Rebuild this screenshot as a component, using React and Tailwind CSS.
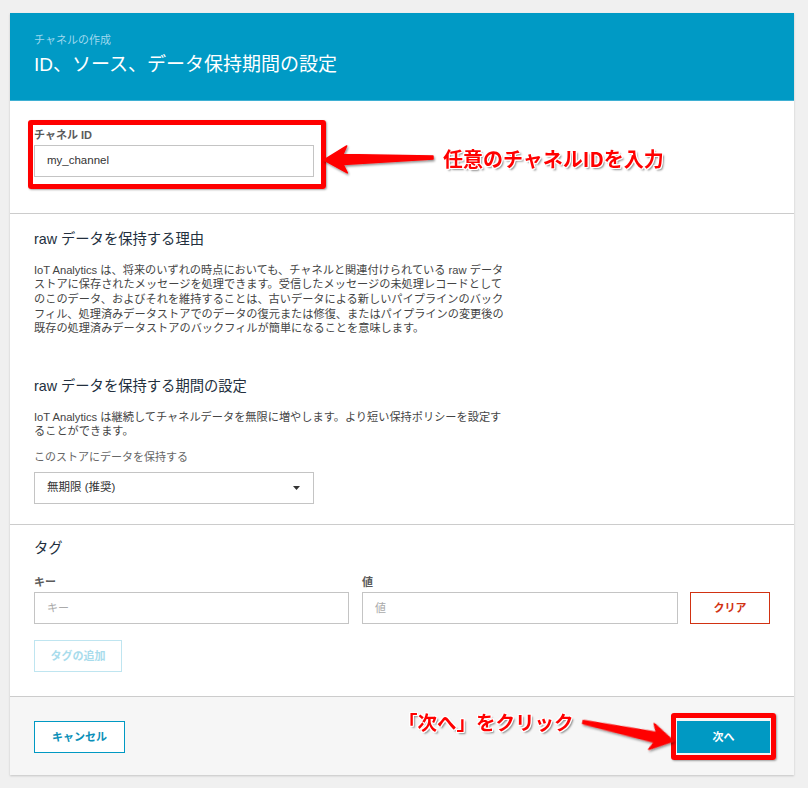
import React from "react";

const para1 = [
  "IoT Analytics は、将来のいずれの時点においても、チャネルと関連付けられている raw データ",
  "ストアに保存されたメッセージを処理できます。受信したメッセージの未処理レコードとして",
  "のこのデータ、およびそれを維持することは、古いデータによる新しいパイプラインのバック",
  "フィル、処理済みデータストアでのデータの復元または修復、またはパイプラインの変更後の",
  "既存の処理済みデータストアのバックフィルが簡単になることを意味します。",
];
const para2 = [
  "IoT Analytics は継続してチャネルデータを無限に増やします。より短い保持ポリシーを設定す",
  "ることができます。",
];

export default function App() {
  return (
    <div className="relative w-[808px] h-[788px] overflow-hidden bg-[#f0f0f0] pt-[13px] pl-[10px] font-['Liberation_Sans','Noto_Sans_CJK_JP',sans-serif]">
      <div className="w-[784px] bg-white shadow-[0_1px_2px_rgba(0,0,0,0.18)]">
        {/* Header */}
        <div className="h-[88px] bg-[#009ac5] pl-6 pt-5 border-b border-[#3fb0d3]">
          <div className="text-[11px] leading-[14px] text-[#9fd8ee]">チャネルの作成</div>
          <div className="mt-[6px] text-[19px] leading-6 text-white">ID、ソース、データ保持期間の設定</div>
        </div>

        {/* Channel ID */}
        <div className="px-6 pt-[28px] pb-[36px]">
          <div className="text-[11px] leading-[12px] font-bold text-[#5a5a5a]">チャネル ID</div>
          <div className="mt-1 w-[280px] h-8 border border-[#c4c4c4] pl-3 flex items-center text-[11.5px] text-[#333]">
            my_channel
          </div>
        </div>

        {/* Raw data */}
        <div className="border-t border-[#cccccc] px-6 pt-[15px] pb-5">
          <div className="text-[14.3px] leading-5 text-[#232f3e]">raw データを保持する理由</div>
          <div className="mt-[13.5px] text-[11.2px] leading-[14.7px] text-[#444]">
            {para1.map((l, i) => (
              <div key={i} className="whitespace-nowrap">{l}</div>
            ))}
          </div>
          <div className="mt-10 text-[14.3px] leading-5 text-[#232f3e]">raw データを保持する期間の設定</div>
          <div className="mt-[13.5px] text-[11.2px] leading-[14.7px] text-[#444]">
            {para2.map((l, i) => (
              <div key={i} className="whitespace-nowrap">{l}</div>
            ))}
          </div>
          <div className="mt-[11px] text-[11px] leading-[14px] text-[#666]">このストアにデータを保持する</div>
          <div className="mt-2 w-[280px] h-8 border border-[#c4c4c4] pl-3 pr-[13px] flex items-center justify-between text-[11.5px] text-[#333]">
            <span>無期限 (推奨)</span>
            <svg width="7" height="4" viewBox="0 0 7 4">
              <polygon points="0,0 7,0 3.5,4" fill="#333" />
            </svg>
          </div>
        </div>

        {/* Tags */}
        <div className="border-t border-[#cccccc] px-6 pt-[13px] pb-6">
          <div className="text-[14.3px] leading-5 text-[#232f3e]">タグ</div>
          <div className="mt-[17px] flex items-end">
            <div className="w-[315px]">
              <div className="text-[11px] leading-[14px] font-bold text-[#5a5a5a]">キー</div>
              <div className="mt-[3px] h-8 border border-[#c4c4c4] pl-3 flex items-center text-[11px] text-[#aaa]">キー</div>
            </div>
            <div className="w-[316px] ml-[13px]">
              <div className="text-[11px] leading-[14px] font-bold text-[#5a5a5a]">値</div>
              <div className="mt-[3px] h-8 border border-[#c4c4c4] pl-3 flex items-center text-[11px] text-[#aaa]">値</div>
            </div>
            <div className="ml-3 w-[80px] h-8 border border-[#d13212] flex items-center justify-center text-[11px] font-bold text-[#d13212]">
              クリア
            </div>
          </div>
          <div className="mt-4 w-[88px] h-8 border border-[#bfe5f0] flex items-center justify-center text-[11px] font-bold text-[#a8dcec]">
            タグの追加
          </div>
        </div>

        {/* Footer */}
        <div className="border-t border-[#cccccc] bg-[#f6f6f6] px-6 pt-6 pb-[22px] flex justify-between">
          <div className="w-[91px] h-8 border border-[#0099c3] bg-white flex items-center justify-center text-[11px] font-bold text-[#0a8fb8]">
            キャンセル
          </div>
          <div className="w-[93px] h-8 bg-[#0099c3] flex items-center justify-center text-[11px] font-bold text-white">
            次へ
          </div>
        </div>
      </div>

      {/* Annotation overlays */}
      <div className="absolute left-[28px] top-[120px] w-[298px] h-[69px] border-[5px] border-[#ff0000] rounded-[3px] shadow-[1px_1px_2px_rgba(0,0,0,0.35)] pointer-events-none" />
      <div className="absolute left-[671px] top-[713px] w-[105px] h-[47px] border-[5px] border-[#ff0000] rounded-[3px] shadow-[1px_1px_2px_rgba(0,0,0,0.35)] pointer-events-none" />

      <svg className="absolute left-0 top-0 pointer-events-none" width="808" height="788" viewBox="0 0 808 788">
        <defs>
          <filter id="sh" x="-20%" y="-50%" width="140%" height="200%">
            <feDropShadow dx="1" dy="1.5" stdDeviation="1" floodColor="#000" floodOpacity="0.45" />
          </filter>
        </defs>
        <g filter="url(#sh)">
          <polygon
            transform="translate(433 157.5) rotate(178.7)"
            points="0,-1.5 90,-5 86,-13.5 109,0 86,13.5 90,5 0,1.5"
            fill="#ff0000"
            stroke="#ff0000"
            strokeWidth="1.5"
            strokeLinejoin="round"
          />
          <polygon
            transform="translate(583 722) rotate(11.9)"
            points="0,-1.5 74,-5 70,-13 92,0 70,13 74,5 0,1.5"
            fill="#ff0000"
            stroke="#ff0000"
            strokeWidth="1.5"
            strokeLinejoin="round"
          />
        </g>
      </svg>

      <div className="absolute left-[443px] top-[147px] text-[20px] leading-6 font-bold text-[#ff0000] whitespace-nowrap font-['Noto_Sans_CJK_JP',sans-serif] [text-shadow:-1px_-1px_0_#fff,1px_-1px_0_#fff,-1px_1px_0_#fff,1px_1px_0_#fff,0_-1px_0_#fff,0_1px_0_#fff,-1px_0_0_#fff,1px_0_0_#fff,2px_2px_2px_rgba(0,0,0,0.45)]">
        任意のチャネルIDを入力
      </div>
      <div className="absolute left-[398px] top-[710px] text-[19.5px] leading-6 font-bold text-[#ff0000] whitespace-nowrap font-['Noto_Sans_CJK_JP',sans-serif] [text-shadow:-1px_-1px_0_#fff,1px_-1px_0_#fff,-1px_1px_0_#fff,1px_1px_0_#fff,0_-1px_0_#fff,0_1px_0_#fff,-1px_0_0_#fff,1px_0_0_#fff,2px_2px_2px_rgba(0,0,0,0.45)]">
        「次へ」をクリック
      </div>
    </div>
  );
}
